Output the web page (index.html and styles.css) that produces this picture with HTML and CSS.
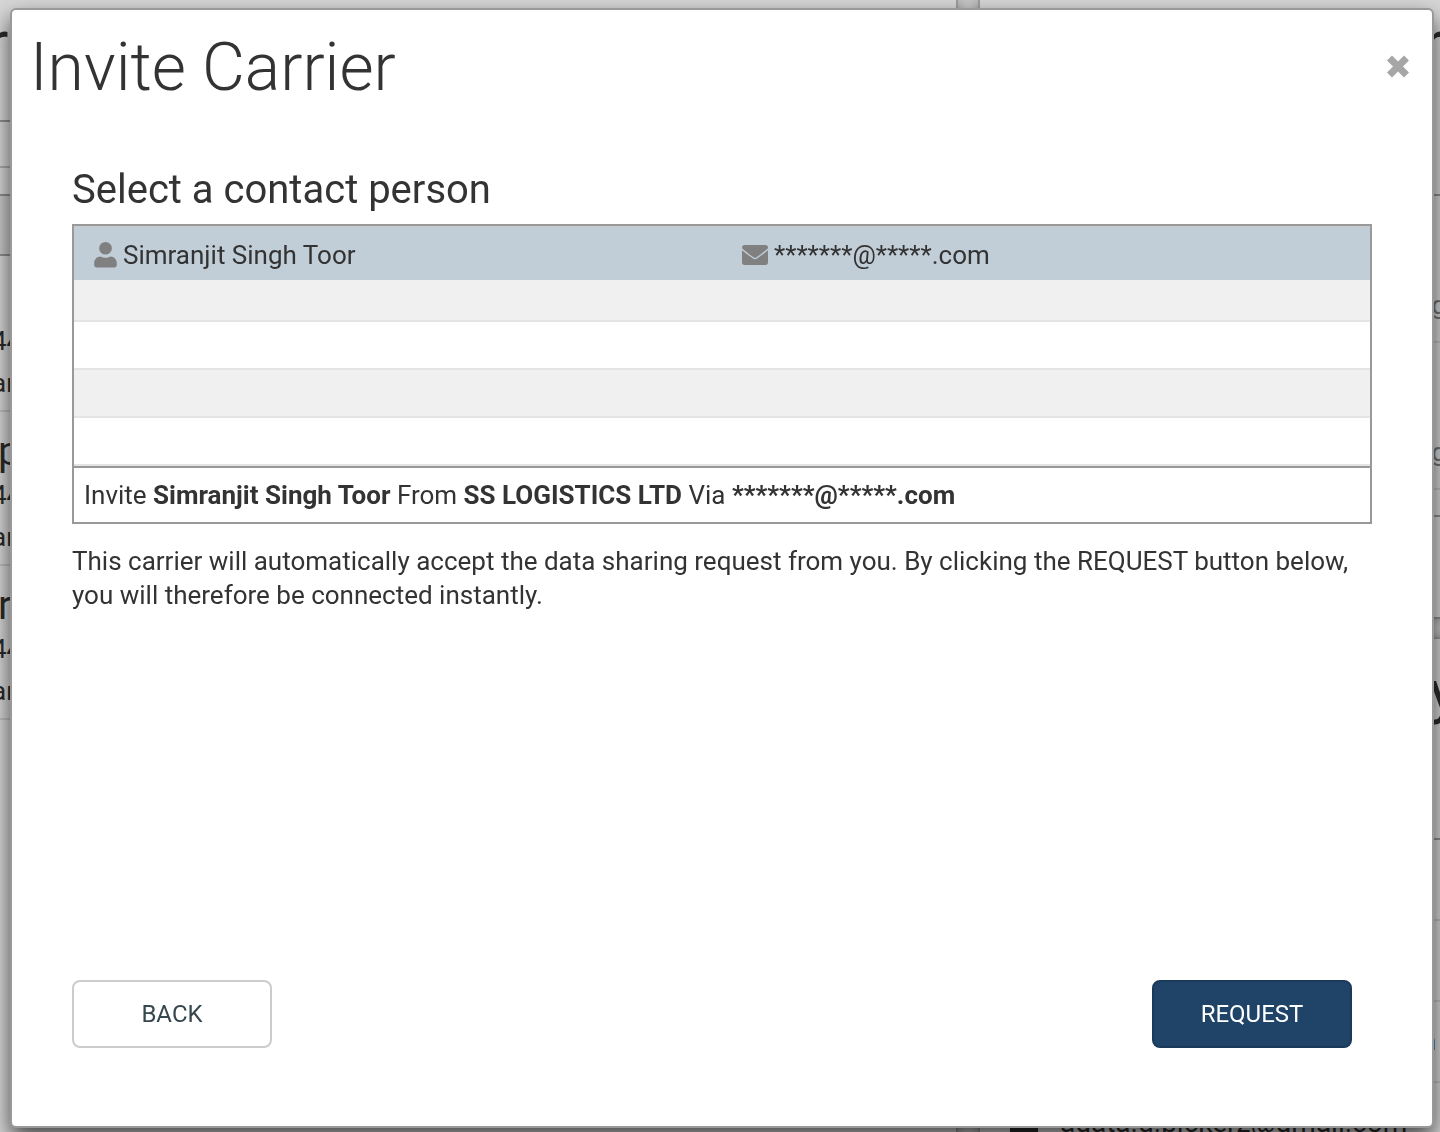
FILE: index.html
```html
<!DOCTYPE html>
<html lang="en">
<head>
<meta charset="utf-8">
<title>Invite Carrier</title>
<link rel="stylesheet" href="styles.css">
</head>
<body>
<div class="app" aria-hidden="true">
  <div class="panel carriers">
    <div class="panel-title">r</div>
    <div class="filter"></div>
    <div class="strip"></div>
    <div class="head"></div>
    <div class="entry"><div class="entry-name">&nbsp;</div><div>44</div><div>an</div></div>
    <div class="entry"><div class="entry-name">p</div><div>44</div><div>an</div></div>
    <div class="entry"><div class="entry-name">r</div><div>44</div><div>an</div></div>
  </div>
  <div class="side">
    <div class="panel requests">
      <div class="panel-title">r</div>
      <div class="request">g</div>
      <div class="request">g</div>
      <div class="pager"></div>
    </div>
    <div class="panel company">
      <div class="panel-title">y</div>
      <div class="detail"></div>
      <div class="detail"></div>
      <div class="detail">n</div>
      <div class="mail"><i class="mail-icon"></i>agata.d.pickerz@gmail.com</div>
    </div>
  </div>
</div>
<div class="backdrop">
  <section class="modal" role="dialog" aria-modal="true" aria-labelledby="modal-title">
    <header class="modal-header">
      <h1 id="modal-title">Invite Carrier</h1>
      <button class="close" type="button" aria-label="Close">
        <svg width="26" height="26" viewBox="0 0 26 26"><path d="M3.500 4L20.500 21M20.500 4L3.500 21" fill="none" stroke="#a6a6a6" stroke-width="7"/></svg>
      </button>
    </header>
    <div class="modal-body">
      <h2>Select a contact person</h2>
      <div class="picker">
        <table class="contacts">
          <tbody>
            <tr class="selected">
              <td><span class="contact"><svg width="23" height="28" viewBox="0 0 24 28"><circle cx="12" cy="7" r="6.600"/><path d="M7 15.500C9 16.600 10.500 16.800 12 16.800s3-.2 5-1.300c4 0 6.800 3 6.800 7v2c0 1.500-1 2.500-2.500 2.500H2.700C1.200 27 .2 26 .2 24.500v-2c0-4 2.800-7 6.800-7z"/></svg>Simranjit Singh Toor</span></td>
              <td><span class="contact"><svg width="26" height="28" viewBox="0 0 26 28"><path d="M2.500 4h21C25 4 26 5 26 6.500v.7c-3 2.800-6 5-9.400 7.500C15.200 15.700 14 16.800 13 16.800s-2.200-1.100-3.600-2.100C6 12.200 3 10 0 7.200v-.7C0 5 1 4 2.500 4zM0 9.200c3 2.500 5.800 4.500 8.600 6.600C10 16.900 11.600 18.300 13 18.300s3-1.400 4.400-2.500C20.200 13.700 23 11.700 26 9.200v12.300c0 1.500-1 2.500-2.500 2.500h-21C1 24 0 23 0 21.500z"/></svg>*******@*****.com</span></td>
            </tr>
            <tr class="spacer"><td colspan="2"></td></tr>
            <tr><td colspan="2"></td></tr>
            <tr><td colspan="2"></td></tr>
            <tr><td colspan="2"></td></tr>
          </tbody>
        </table>
        <p class="summary">Invite <strong>Simranjit Singh Toor</strong> From <strong>SS LOGISTICS LTD</strong> Via <strong>*******@*****.com</strong></p>
      </div>
      <p class="note">This carrier will automatically accept the data sharing request from you. By clicking the REQUEST button below, you will therefore be connected instantly.</p>
    </div>
    <footer class="modal-footer">
      <button class="btn" type="button">BACK</button>
      <button class="btn primary" type="button">REQUEST</button>
    </footer>
  </section>
</div>
</body>
</html>
```
FILE: styles.css
```css
* { box-sizing: border-box; }
body {
  margin: 0;
  height: 100vh;
  overflow: hidden;
  background: #eee;
  color: #333;
  font: 26px/34px Roboto, "Liberation Sans", sans-serif;
}
h1, h2, p { margin: 0; font-weight: 400; }

/* page behind the dialog */
.app {
  display: grid;
  grid-template-columns: 2fr 1fr;
  gap: 20px;
  margin: 0 -34px;
}
.panel {
  background: #fff;
  border: 2px solid #bbb;
  border-top: 0;
  box-shadow: 0 0 10px rgba(0, 0, 0, .25);
}
.panel-title { font-size: 60px; line-height: 86px; }
.carriers { height: 1200px; }
.carriers .panel-title { height: 122px; padding-left: 20px; border-bottom: 2px solid #aaa; }
.filter { height: 46px; border-bottom: 2px solid #ccc; }
.strip { height: 28px; border-bottom: 2px solid #aaa; }
.head { height: 60px; margin-bottom: 2px; background: #f0f0f0; border-bottom: 2px solid #aaa; }
.entry { height: 154px; padding-left: 24px; line-height: 42px; border-bottom: 2px solid #e4e4e4; }
.entry-name { padding-left: 6px; padding-top: 18px; font-size: 40px; line-height: 44px; }
.requests { height: 619px; border-bottom-color: #aaa; }
.requests .panel-title { height: 196px; padding-right: 28px; text-align: right; border-bottom: 2px solid #aaa; }
.request { height: 147px; padding: 92px 26px 0; text-align: right; color: #888; border-bottom: 2px solid #e4e4e4; }
.pager { height: 27px; border-bottom: 2px solid #aaa; }
.company { height: 560px; margin-top: 18px; border-top: 2px solid #bbb; }
.company .panel-title { height: 201px; padding: 10px 14px 0; text-align: right; border-bottom: 2px solid #aaa; }
.detail { height: 81px; padding: 22px 36px 0; text-align: right; border-bottom: 2px solid #e4e4e4; }
.mail { display: flex; align-items: center; gap: 22px; height: 80px; padding-left: 30px; font-size: 28px; }
.mail-icon { width: 28px; height: 22px; background: #333; }

/* dialog */
.backdrop {
  position: fixed;
  inset: 0;
  display: flex;
  padding: 8px 6px 4px 10px;
  background: rgba(0, 0, 0, .16);
}
.modal {
  flex: 1;
  display: flex;
  flex-direction: column;
  background: #fff;
  border: 2px solid #999;
  border-radius: 6px;
  box-shadow: 0 10px 22px rgba(0, 0, 0, .68);
}
.modal-header {
  display: flex;
  justify-content: space-between;
  align-items: center;
  padding: 20px 20px 0 18px;
}
h1 { padding-top: 2px; font-size: 66px; line-height: 72px; font-weight: 300; }
.close { padding: 0; border: 0; background: none; line-height: 0; cursor: pointer; }
.modal-body { flex: 1; padding: 60px 60px 0; }
h2 { padding-bottom: 8px; font-size: 40px; line-height: 52px; }
.picker { border: 2px solid #999; }
.contacts { width: 100%; table-layout: fixed; border-collapse: separate; border-spacing: 0; }
.contacts td { height: 48px; padding: 0 20px; border-bottom: 2px solid #e4e4e4; }
.contacts tr:nth-child(even) td { background: #f0f0f0; }
.contacts .spacer td { height: 42px; }
.contacts .selected td { height: 54px; background: #c1cdd7; border-top: 2px solid #c6ccd1; border-bottom: 0; }
.contact { display: flex; align-items: center; gap: 6px; padding-top: 2px; }
.contact svg { fill: #808080; }
.summary { padding: 10px; border-top: 2px solid #999; }
.note { padding-top: 20px; }
.modal-footer { display: flex; justify-content: space-between; padding: 0 80px 78px 60px; }
.btn {
  width: 200px;
  height: 68px;
  border: 2px solid #ccc;
  border-radius: 8px;
  background: #fff;
  color: #37474f;
  font: 24px/32px Roboto, "Liberation Sans", sans-serif;
  cursor: pointer;
}
.btn.primary { background: #1f4468; border-color: #193a5a; color: #fff; }
```
